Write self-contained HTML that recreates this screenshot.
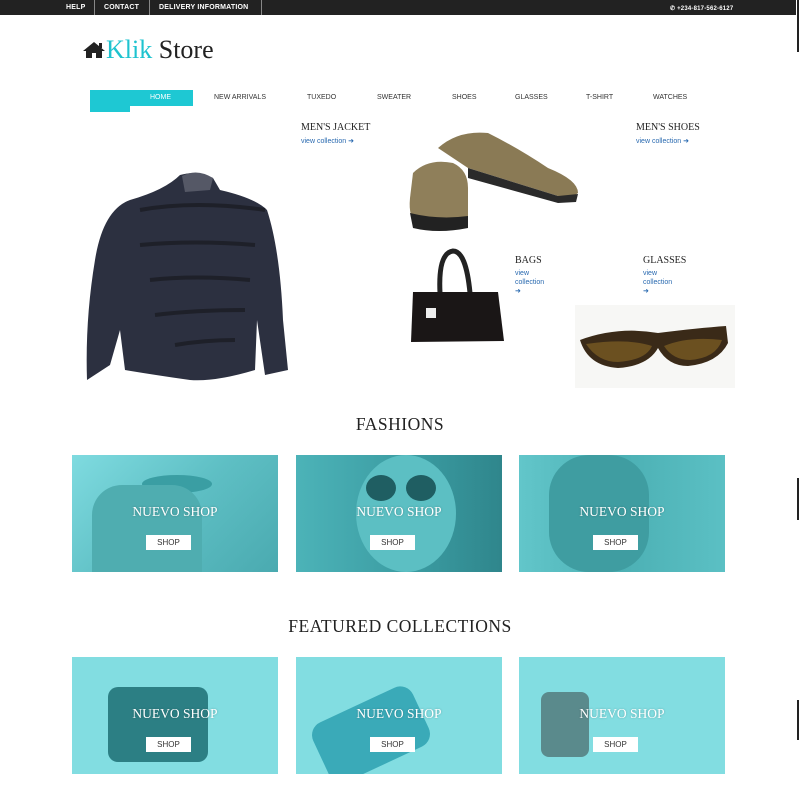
<!DOCTYPE html>
<html><head><meta charset="utf-8"><style>
*{margin:0;padding:0;box-sizing:border-box}
body{width:800px;height:800px;background:#fff;position:relative;overflow:hidden;font-family:"Liberation Sans",sans-serif}
.a{position:absolute}
.top{left:0;top:0;width:796px;height:15px;background:#222}
.top span{position:absolute;top:4px;color:#fff;font-size:7px;font-weight:bold;letter-spacing:.2px}
.sep{position:absolute;top:0;width:1px;height:15px;background:#888}
.nav{top:94px;font-size:7px;color:#333}
.serif{font-family:"Liberation Serif",serif}
.lbl{font-family:"Liberation Serif",serif;font-size:10px;color:#222}
.vc{font-size:7px;color:#2a6ab0;line-height:9px}
.card{width:206px;height:117px;overflow:hidden}
.card .t{position:absolute;left:0;width:100%;top:49px;text-align:center;color:#fff;font-family:"Liberation Serif",serif;font-size:13.5px;text-shadow:0 0 2px rgba(0,0,0,.25)}
.card .b{position:absolute;left:50%;margin-left:-29px;top:80px;width:45px;height:15px;background:#fff;color:#333;font-size:8px;text-align:center;line-height:15px}
h2{position:absolute;width:100%;text-align:center;font-family:"Liberation Serif",serif;font-weight:normal;color:#222;font-size:17.5px;letter-spacing:.5px}
</style></head><body>
<div class="a top">
<span style="left:66px">HELP</span><div class="sep" style="left:94px"></div>
<span style="left:104px">CONTACT</span><div class="sep" style="left:149px"></div>
<span style="left:159px">DELIVERY INFORMATION</span><div class="sep" style="left:261px"></div>
<span style="left:670px;font-size:6px;top:5px">&#9990; +234-817-562-6127</span>
</div>
<div class="a" style="left:796px;top:0;width:4px;height:800px;background:#fff"></div>
<div class="a" style="left:797px;top:0;width:2px;height:52px;background:#222"></div>
<div class="a" style="left:797px;top:478px;width:2px;height:42px;background:#222"></div>
<div class="a" style="left:797px;top:700px;width:2px;height:40px;background:#222"></div>

<svg class="a" style="left:82px;top:41px" width="24" height="18" viewBox="0 0 24 18"><path d="M12 1 L1 10 L4 10 L4 17 L10 17 L10 12 L14 12 L14 17 L20 17 L20 10 L23 10 Z" fill="#222"/><rect x="17" y="2" width="3" height="5" fill="#222"/></svg>
<div class="a serif" style="left:106px;top:35px;font-size:26px;color:#222"><span style="color:#1ec3cf">Klik</span> Store</div>

<div class="a" style="left:90px;top:90px;width:103px;height:16px;background:#1ec8d3"></div>
<div class="a" style="left:90px;top:106px;width:40px;height:6px;background:#1ec8d3"></div>
<div class="a nav" style="left:150px;color:#fff">HOME</div>
<div class="a nav" style="left:214px">NEW ARRIVALS</div>
<div class="a nav" style="left:307px">TUXEDO</div>
<div class="a nav" style="left:377px">SWEATER</div>
<div class="a nav" style="left:452px">SHOES</div>
<div class="a nav" style="left:515px">GLASSES</div>
<div class="a nav" style="left:586px">T-SHIRT</div>
<div class="a nav" style="left:653px">WATCHES</div>

<!-- jacket -->
<svg class="a" style="left:85px;top:170px" width="212" height="215" viewBox="0 0 212 215">
<path d="M95 5 Q112 0 128 8 L135 20 Q170 28 182 40 Q195 80 198 150 L203 200 L180 205 L172 150 L170 200 Q130 212 105 210 Q70 205 40 200 L35 160 L25 195 L2 210 Q0 150 10 90 Q18 40 45 30 Q80 20 95 5 Z" fill="#2c3040"/>
<g stroke="#1e2029" stroke-width="4" fill="none"><path d="M55 40 Q110 30 180 40"/><path d="M55 75 Q110 70 170 75"/><path d="M65 110 Q110 105 165 110"/><path d="M70 145 Q110 140 160 140"/><path d="M90 175 Q120 170 150 170"/></g>
<path d="M97 6 Q112 -2 128 8 L125 20 L100 22 Z" fill="#555866"/>
</svg>

<div class="a lbl" style="left:301px;top:122px">MEN'S JACKET</div>
<div class="a vc" style="left:301px;top:137px">view collection &#10140;</div>
<div class="a lbl" style="left:636px;top:122px">MEN'S SHOES</div>
<div class="a vc" style="left:636px;top:137px">view collection &#10140;</div>

<!-- shoes -->
<svg class="a" style="left:408px;top:128px" width="175" height="105" viewBox="0 0 175 105">
<path d="M30 20 Q50 2 80 5 Q110 20 140 40 Q170 52 170 65 Q165 70 150 68 L60 40 Z" fill="#8a7a55"/>
<path d="M60 40 L150 68 L170 66 L168 74 L150 75 L60 50 Z" fill="#2a2a2a"/>
<path d="M5 45 Q20 30 45 35 Q60 42 60 60 L60 95 Q40 102 10 98 Q0 90 2 70 Z" fill="#8f7f5a"/>
<path d="M2 85 Q30 92 60 88 L60 100 Q30 106 5 100 Z" fill="#222"/>
</svg>

<div class="a lbl" style="left:515px;top:255px">BAGS</div>
<div class="a vc" style="left:515px;top:269px">view<br>collection<br>&#10140;</div>
<div class="a lbl" style="left:643px;top:255px">GLASSES</div>
<div class="a vc" style="left:643px;top:269px">view<br>collection<br>&#10140;</div>

<!-- bag -->
<svg class="a" style="left:408px;top:248px" width="105" height="98" viewBox="0 0 105 98">
<path d="M32 45 Q30 5 45 3 Q58 3 62 45" stroke="#222" stroke-width="5" fill="none"/>
<path d="M5 44 L90 44 L96 93 L3 94 Z" fill="#1a1616"/>
<rect x="18" y="60" width="10" height="10" fill="#eee"/>
</svg>

<!-- glasses -->
<div class="a" style="left:575px;top:305px;width:160px;height:83px;background:#f7f7f5"></div>
<svg class="a" style="left:578px;top:318px" width="152" height="55" viewBox="0 0 152 55">
<path d="M2 22 Q40 8 80 15 Q120 10 148 8 L150 25 Q140 45 110 48 Q90 48 80 30 Q70 48 40 50 Q10 48 2 22 Z" fill="#3a2a18"/>
<path d="M8 26 Q20 44 40 44 Q68 42 74 28 Q50 20 8 26 Z M86 28 Q95 42 112 42 Q138 40 144 22 Q110 18 86 28Z" fill="#6b5020"/>
</svg>

<h2 style="top:414px">FASHIONS</h2>
<h2 style="top:616px">FEATURED COLLECTIONS</h2>

<div class="a card" style="left:72px;top:455px;background:linear-gradient(135deg,#7fdbe0 0%,#5ebfc4 50%,#4aaab0 100%)"><div class="a" style="left:70px;top:20px;width:70px;height:18px;border-radius:50%;background:#3a9ea3"></div><div class="a" style="left:20px;top:30px;width:110px;height:87px;background:#4fadb0;border-radius:30px 30px 0 0"></div><div class="t">NUEVO SHOP</div><div class="b">SHOP</div></div>
<div class="a card" style="left:296px;top:455px;background:linear-gradient(90deg,#4cb3b8,#3a9aa0 60%,#2f868c)"><div class="a" style="left:60px;top:0;width:100px;height:117px;border-radius:50%;background:#5cbfc3"></div><div class="a" style="left:70px;top:20px;width:30px;height:26px;border-radius:50%;background:#1f5e62"></div><div class="a" style="left:110px;top:20px;width:30px;height:26px;border-radius:50%;background:#1f5e62"></div><div class="t">NUEVO SHOP</div><div class="b">SHOP</div></div>
<div class="a card" style="left:519px;top:455px;background:linear-gradient(90deg,#62c6ca,#4cb0b4 50%,#5bc0c4)"><div class="a" style="left:30px;top:0;width:100px;height:117px;border-radius:40px;background:#3f9da1"></div><div class="t">NUEVO SHOP</div><div class="b">SHOP</div></div>

<div class="a card" style="left:72px;top:657px;background:#82dde1"><div class="a" style="left:36px;top:30px;width:100px;height:75px;border-radius:10px;background:#2c7f84"></div><div class="t">NUEVO SHOP</div><div class="b">SHOP</div></div>
<div class="a card" style="left:296px;top:657px;background:#82dde1"><div class="a" style="left:20px;top:45px;width:110px;height:65px;border-radius:14px;background:#3aaab8;transform:rotate(-25deg)"></div><div class="t">NUEVO SHOP</div><div class="b">SHOP</div></div>
<div class="a card" style="left:519px;top:657px;background:#82dde1"><div class="a" style="left:22px;top:35px;width:48px;height:65px;border-radius:8px;background:#5a8a8c"></div><div class="t">NUEVO SHOP</div><div class="b">SHOP</div></div>
</body></html>
